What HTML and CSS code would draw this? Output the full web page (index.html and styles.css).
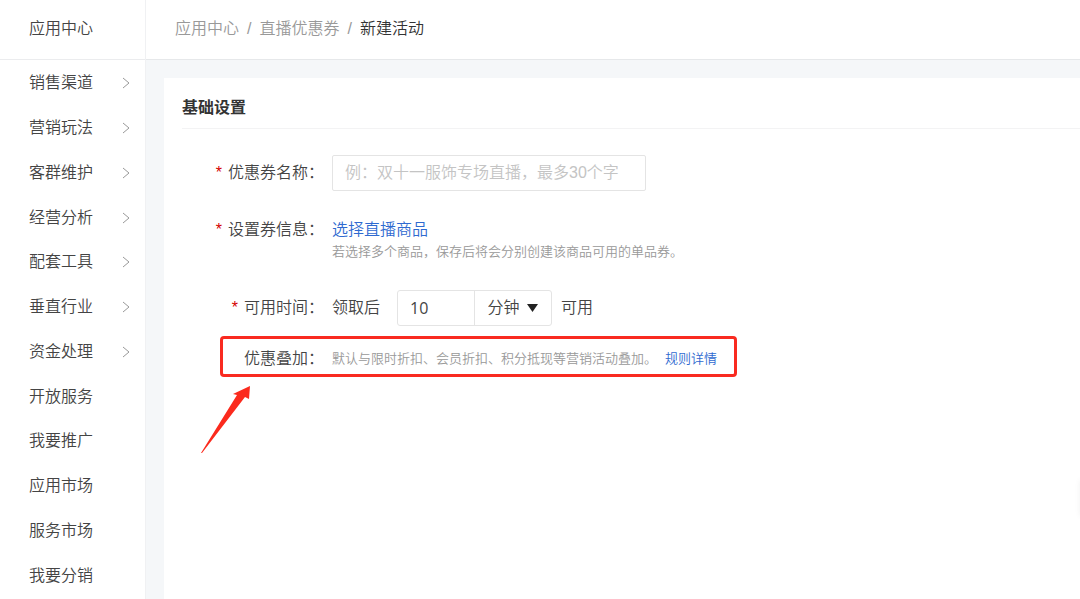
FILE: index.html
```html
<!DOCTYPE html>
<html lang="zh-CN">
<head>
<meta charset="utf-8">
<meta name="viewport" content="width=device-width, initial-scale=1">
<title>新建活动</title>
<link rel="stylesheet" href="styles.css">
</head>
<body>
<svg class="defs" aria-hidden="true">
  <symbol id="chevron" viewBox="0 0 8 12"><path d="M1 1l6 5-6 5" fill="none" stroke="currentColor" stroke-width="1"/></symbol>
</svg>
<div class="app">
  <aside class="sidebar">
    <div class="sidebar-title">应用中心</div>
    <nav class="menu">
      <a class="menu-item" href="#">销售渠道<svg class="chevron"><use href="#chevron"/></svg></a>
      <a class="menu-item" href="#">营销玩法<svg class="chevron"><use href="#chevron"/></svg></a>
      <a class="menu-item" href="#">客群维护<svg class="chevron"><use href="#chevron"/></svg></a>
      <a class="menu-item" href="#">经营分析<svg class="chevron"><use href="#chevron"/></svg></a>
      <a class="menu-item" href="#">配套工具<svg class="chevron"><use href="#chevron"/></svg></a>
      <a class="menu-item" href="#">垂直行业<svg class="chevron"><use href="#chevron"/></svg></a>
      <a class="menu-item" href="#">资金处理<svg class="chevron"><use href="#chevron"/></svg></a>
      <a class="menu-item" href="#">开放服务</a>
      <a class="menu-item" href="#">我要推广</a>
      <a class="menu-item" href="#">应用市场</a>
      <a class="menu-item" href="#">服务市场</a>
      <a class="menu-item" href="#">我要分销</a>
    </nav>
  </aside>
  <div class="main">
    <header class="breadcrumb">
      <a href="#">应用中心</a><span>/</span><a href="#">直播优惠券</a><span>/</span><strong>新建活动</strong>
    </header>
    <main class="content">
      <section class="card">
        <h1 class="card-title">基础设置</h1>
        <form class="form">
          <div class="row">
            <label class="label" for="name"><span class="required">*</span>优惠券名称：</label>
            <input class="input" id="name" type="text" placeholder="例：双十一服饰专场直播，最多30个字">
          </div>
          <div class="row row-top">
            <span class="label"><span class="required">*</span>设置券信息：</span>
            <div class="stack">
              <a class="link" href="#">选择直播商品</a>
              <p class="hint">若选择多个商品，保存后将会分别创建该商品可用的单品券。</p>
            </div>
          </div>
          <div class="row">
            <label class="label" for="time"><span class="required">*</span>可用时间：</label>
            <div class="time">
              <span>领取后</span>
              <div class="group">
                <input class="amount" id="time" type="text" value="10">
                <div class="unit">
                  <select aria-label="时间单位"><option>分钟</option></select>
                  <svg class="caret" viewBox="0 0 11 8"><path d="M0 0h11L5.500 8z" fill="#222"/></svg>
                </div>
              </div>
              <span class="after">可用</span>
            </div>
          </div>
          <div class="row row-stack">
            <span class="label">优惠叠加：</span>
            <p class="hint">默认与限时折扣、会员折扣、积分抵现等营销活动叠加。<a class="link hint-link" href="#">规则详情</a></p>
            <div class="highlight"></div>
            <svg class="arrow" viewBox="0 0 52 70"><path d="M1 68L37 10l-4-1L50 1l-1 13-4-2L2 68z" fill="#fb2a1d"/></svg>
          </div>
        </form>
      </section>
    </main>
  </div>
</div>
<div class="edge-tab"></div>
</body>
</html>
```

FILE: styles.css
```css
* { box-sizing: border-box; }
body {
  margin: 0;
  background: #fff;
  color: #444;
  font-family: "Liberation Sans", "Noto Sans CJK SC", sans-serif;
  font-size: 16px;
  font-weight: 350;
  line-height: 22px;
  overflow-x: hidden;
}
a { color: inherit; text-decoration: none; }
p { margin: 0; }
input, select { font: inherit; color: inherit; }
.defs { display: none; }

.app { display: flex; min-height: 100vh; }

.sidebar {
  display: flex;
  flex-direction: column;
  flex: none;
  width: 146px;
  border-right: 1px solid #f0f1f3;
}
.sidebar-title {
  height: 60px;
  padding: 18px 0 0 29px;
  border-bottom: 1px solid #ebecee;
}
.menu {
  display: flex;
  flex-direction: column;
  flex: 1;
  padding-bottom: 1px;
  padding-top: 1px;
}
.menu-item {
  display: flex;
  flex: 1;
  align-items: center;
  justify-content: space-between;
  padding: 0 15px 0 29px;
}
.chevron { width: 8px; height: 12px; color: #999; }

.main { display: flex; flex-direction: column; flex: 1; min-width: 0; }
.breadcrumb {
  display: flex;
  gap: 8px;
  height: 60px;
  padding: 18px 29px 0;
  border-bottom: 1px solid #e6e8ea;
  color: #999;
}
.breadcrumb strong { color: #333; font-weight: 350; }

.content { display: flex; flex: 1; padding: 18px 0 0 18px; background: #f5f7f9; }
.card { flex: 1; min-width: 0; padding-left: 18px; background: #fff; }
.card-title {
  margin: 0;
  padding: 19px 0 9px;
  border-bottom: 1px solid #f3f3f4;
  color: #333;
  font-size: 16px;
  font-weight: 700;
}

.form { padding-top: 26px; }
.row { display: flex; align-items: center; gap: 8px; margin-bottom: 28px; }
.row-top { align-items: flex-start; margin-bottom: 27px; }
.label { flex: none; width: 142px; text-align: right; }
.required { margin-right: 6px; color: #d40000; }
.input {
  width: 314px;
  height: 36px;
  padding: 0 12px;
  border: 1px solid #e4e4e4;
  border-radius: 2px;
  background: #fff;
}
.input::placeholder { color: #c4c4c4; opacity: 1; }
.stack { display: flex; flex-direction: column; align-items: flex-start; }
.link { color: #2f6ad0; }
.hint { color: #999; font-size: 13px; }
.hint-link { margin-left: 8px; }

.time { display: flex; align-items: center; }
.group {
  display: flex;
  width: 155px;
  height: 36px;
  margin: 0 9px 0 17px;
  border: 1px solid #e4e4e4;
  border-radius: 3px;
}
.amount {
  flex: none;
  width: 50%;
  padding: 0 12px;
  border: 0;
  border-right: 1px solid #e4e4e4;
  background: none;
  font-family: "Open Sans", sans-serif;
  font-weight: 400;
}
.unit { position: relative; flex: none; width: 50%; }
.unit select {
  width: 100%;
  height: 100%;
  padding: 0 13px;
  border: 0;
  background: none;
  appearance: none;
}
.caret {
  position: absolute;
  top: 13px;
  right: 13px;
  width: 11px;
  height: 8px;
  pointer-events: none;
}

.row-stack { position: relative; margin-top: -18px; padding: 12px 0 8px; }
.highlight {
  position: absolute;
  top: 0;
  left: 38px;
  width: 517px;
  height: 41px;
  border: 3px solid #f92a20;
  border-radius: 4px;
  pointer-events: none;
}
.arrow { position: absolute; top: 49px; left: 18px; width: 52px; height: 70px; }
.edge-tab {
  position: fixed;
  top: 480px;
  right: -36px;
  width: 36px;
  height: 36px;
  box-shadow: 0 0 6px rgba(0, 0, 0, 0.06);
}
```
